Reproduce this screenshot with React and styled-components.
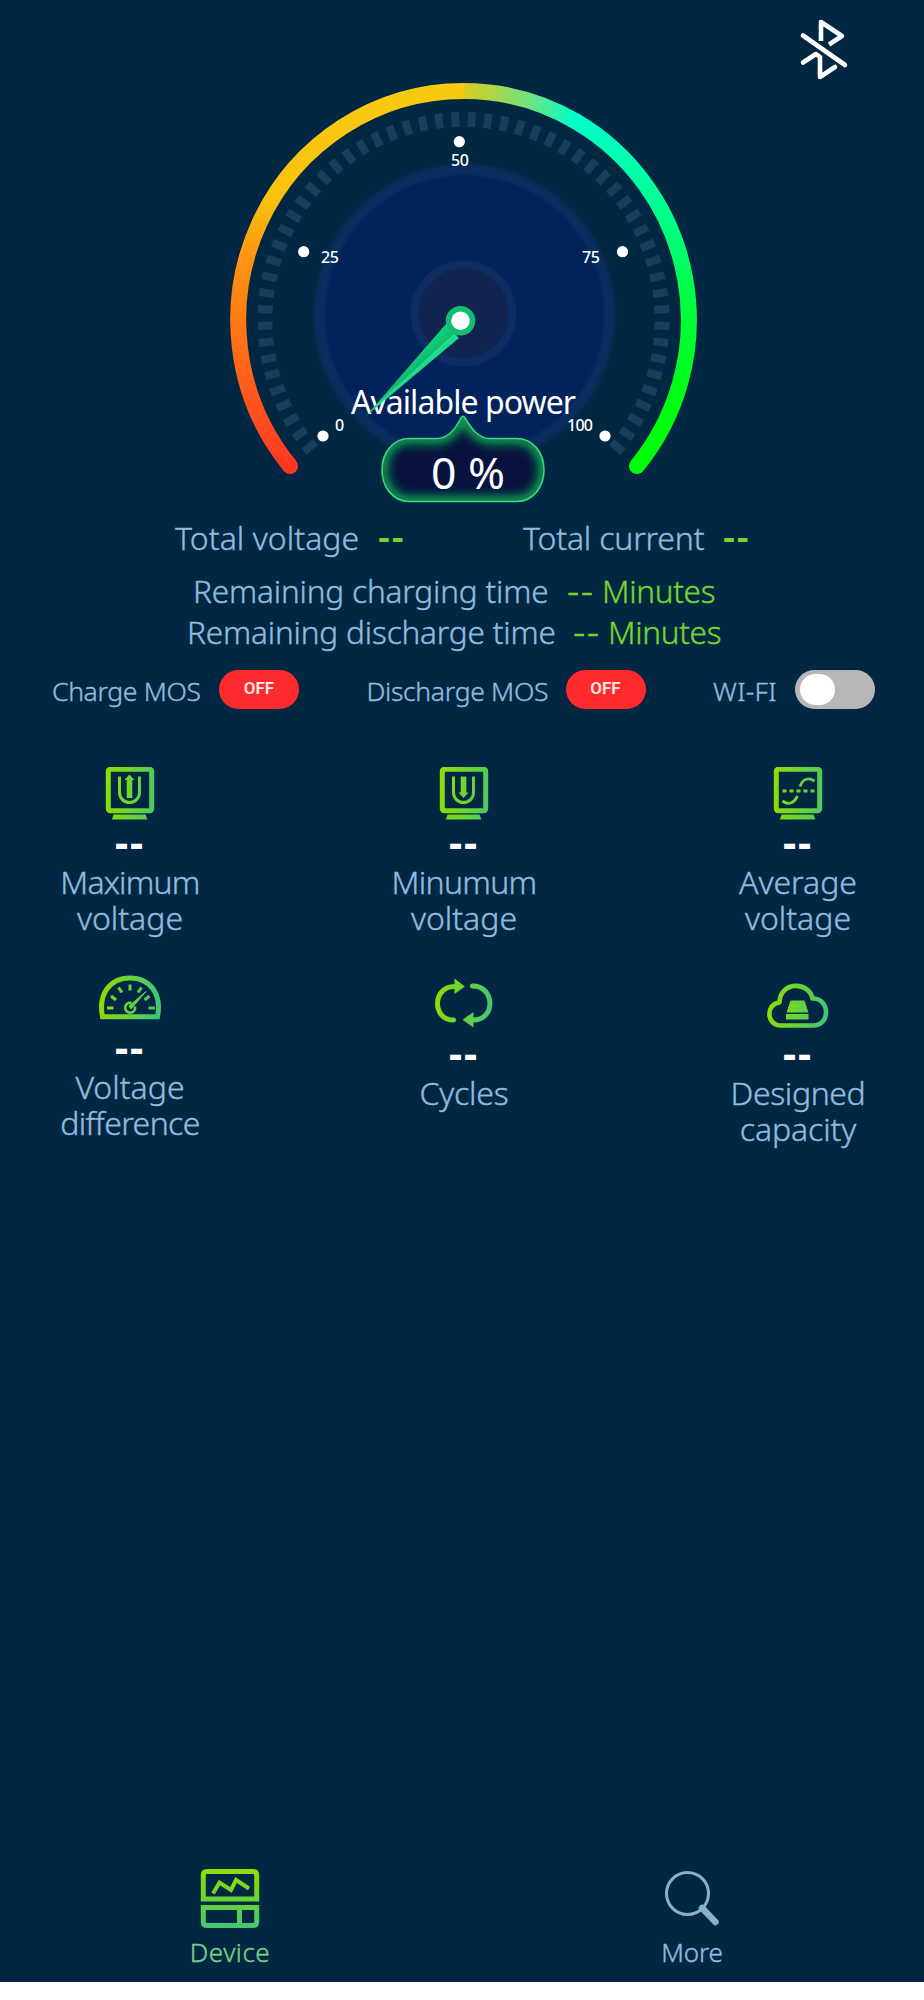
import React, { useState } from 'react';
import styled, { createGlobalStyle, css } from 'styled-components';

const GlobalStyle = createGlobalStyle`
    * {
        box-sizing: border-box;
    }

    body {
        margin: 0;
        background: #ffffff;
        font-family: "Noto Sans", "Open Sans", sans-serif;
        font-weight: 300;
    }
`

const Screen = styled.div`
    width: 924px;
    height: 1982px;
    background: #012743;
    color: #8fbbdf;
    display: flex;
    flex-direction: column;
`

const Header = styled.header`
    height: 80px;
    display: flex;
    justify-content: flex-end;
    padding: 16px 73px 0 0;
`

const GaugeBox = styled.section`
    height: 430px;
    display: flex;
    justify-content: center;

    text {
        fill: #ffffff;
    }
`

const Totals = styled.div`
    height: 54px;
    display: flex;
    padding: 6px 0 0 175px;
    gap: 120px;
    font-size: 32px;
    line-height: 44px;
`

const Total = styled.div`
    display: flex;
    gap: 20px;
    white-space: nowrap;
`

const Name = styled.span`
    width: ${(props) => props.$width}px;
    letter-spacing: ${(props) => props.$spacing || 0}px;
    white-space: nowrap;
    -webkit-text-stroke: 0.4px currentColor;
`

const Dashes = styled.span`
    color: #74d62c;
    white-space: nowrap;

    ${(props) => props.$kind === 'total' && css`
        width: 25px;
        font-size: 37px;
        font-weight: 600;
        line-height: 39px;
        letter-spacing: 1.8px;
    `}

    ${(props) => props.$kind === 'time' && css`
        width: 35px;
        font-size: 38px;
        line-height: 38px;
        letter-spacing: 1.5px;
        -webkit-text-stroke: 0.4px currentColor;
    `}
`

const Times = styled.div`
    height: 98px;
    padding-top: 6px;
`

const Time = styled.div`
    display: flex;
    height: 41px;
    padding-left: ${(props) => props.$left}px;
    font-size: 31.5px;
    line-height: 41px;
`

const Unit = styled.span`
    color: #74d62c;
    letter-spacing: -0.3px;
    -webkit-text-stroke: 0.4px currentColor;
`

const Switches = styled.div`
    height: 54px;
    display: flex;
    align-items: center;
    justify-content: space-between;
    padding: 1px 49px 0 52px;
    font-size: 26.5px;
`

const SwitchItem = styled.label`
    display: flex;
    align-items: center;
    gap: 19px;
    line-height: 40px;
`

const SwitchName = styled(Name)`
    padding-top: 3px;
`

const Toggle = styled.button`
    width: 80px;
    height: 39px;
    padding: 0 5px;
    border: none;
    border-radius: 20px;
    background: ${(props) => props.$gray ? '#b8b6b7' : '#ff2a2b'};
    color: #ffe9e9;
    display: flex;
    align-items: center;
    justify-content: ${(props) => props.$gray ? 'flex-start' : 'center'};
    font-family: Roboto, sans-serif;
    font-size: 17px;
    font-weight: 600;
    line-height: 37px;
    padding-bottom: ${(props) => props.$gray ? 0 : 2}px;
    cursor: pointer;
`

const Knob = styled.span`
    width: 35px;
    height: 31px;
    border-radius: 16px;
    background: #ffffff;
`

const Metrics = styled.section`
    flex: 1;
    display: grid;
    grid-template-columns: 150px 150px 150px;
    grid-auto-rows: 208px;
    justify-content: space-between;
    padding: 51px 51px 0 55px;
`

const Metric = styled.div`
    display: flex;
    flex-direction: column;
    align-items: center;
    padding-top: ${(props) => props.$top || 0}px;
`

const MetricIcon = styled.div`
    height: ${(props) => props.$height}px;
    flex: none;

    svg {
        display: block;
    }
`

const Value = styled.div`
    height: 36px;
    margin-bottom: 1px;
    color: #ffffff;
    font-size: 41px;
    font-weight: 700;
    line-height: 30px;
    letter-spacing: 1.8px;
`

const Label = styled.div`
    display: flex;
    flex-direction: column;
    align-items: center;
    font-size: 32px;
    line-height: 36.4px;
`

const Line = styled.span`
    letter-spacing: ${(props) => props.$spacing || 0}px;
    -webkit-text-stroke: 0.4px currentColor;
`

const TabBar = styled.nav`
    height: 130px;
    display: flex;
    border-top: 1px solid #04213a;
`

const Tab = styled.button`
    width: 50%;
    padding: 15px 2px 0 0;
    border: none;
    background: none;
    display: flex;
    flex-direction: column;
    align-items: center;
    gap: 5px;
    font: inherit;
    font-size: 26px;
    line-height: 36px;
    letter-spacing: ${(props) => props.$spacing || 0}px;
    color: ${(props) => props.$active ? '#72d184' : '#8fbbdf'};
    -webkit-text-stroke: 0.4px currentColor;
    cursor: pointer;
`

const TICK_STEP = 4.7;
const ticks = Array.from({ length: 56 }, (_, i) => (i - 27.5) * TICK_STEP);

const marks = [
    { value: '0', x: 323, y: 436, tx: 335, ty: 431, width: 8 },
    { value: '25', x: 303.7, y: 251.7, tx: 321, ty: 263, width: 18 },
    { value: '50', x: 459.3, y: 141.7, tx: 451, ty: 166, width: 18 },
    { value: '75', x: 622.5, y: 251.7, tx: 582, ty: 263, width: 18 },
    { value: '100', x: 605, y: 436, tx: 567, ty: 431, width: 26 },
];

const bubble = 'M409 438.5H437C449 438.5 456 428 461 418Q463 414.500 465 418C471 428 478 438.500 490 438.500H517C533 438.500 544 453 544 470S533 501.500 517 501.500H409C393 501.500 382 487 382 470S393 438.500 409 438.500Z';

const Gauge = () => (
    <svg width="484" height="430" viewBox="220 80 484 430">
        <defs>
            <linearGradient id="arcLeft" gradientUnits="userSpaceOnUse" x1="0" y1="466" x2="0" y2="83">
                <stop offset="0" stopColor="#ff3823" />
                <stop offset="0.38" stopColor="#ff7a14" />
                <stop offset="0.55" stopColor="#ff9611" />
                <stop offset="0.7" stopColor="#fac20e" />
                <stop offset="1" stopColor="#f7cb10" />
            </linearGradient>
            <linearGradient id="arcTop" gradientUnits="userSpaceOnUse" x1="463" y1="91" x2="574" y2="121">
                <stop offset="0" stopColor="#ddca20" />
                <stop offset="0.2" stopColor="#b5d440" />
                <stop offset="0.6" stopColor="#6be486" />
                <stop offset="1" stopColor="#00ffc8" />
            </linearGradient>
            <linearGradient id="arcRight" gradientUnits="userSpaceOnUse" x1="0" y1="121" x2="0" y2="466">
                <stop offset="0" stopColor="#00ffc8" />
                <stop offset="0.25" stopColor="#00ff91" />
                <stop offset="0.5" stopColor="#00ff45" />
                <stop offset="0.8" stopColor="#00ff16" />
                <stop offset="1" stopColor="#00fe08" />
            </linearGradient>
            <radialGradient id="dial">
                <stop offset="0" stopColor="#02235e" />
                <stop offset="0.9" stopColor="#02235a" />
                <stop offset="0.93" stopColor="#0a2d61" />
                <stop offset="0.97" stopColor="#082d5a" />
                <stop offset="1" stopColor="#012743" />
            </radialGradient>
            <linearGradient id="needle" gradientUnits="userSpaceOnUse" x1="405" y1="367" x2="416" y2="379">
                <stop offset="0" stopColor="#10cf78" />
                <stop offset="0.5" stopColor="#10b96f" />
                <stop offset="0.55" stopColor="#22de8b" />
                <stop offset="1" stopColor="#1bd584" />
            </linearGradient>
            <filter id="glow" x="-20%" y="-50%" width="140%" height="200%">
                <feGaussianBlur stdDeviation="5" />
            </filter>
            <clipPath id="bubbleClip">
                <path d={bubble} />
            </clipPath>
        </defs>

        <g fill="none" strokeWidth="16">
            <path d="M576 121.500A225.500 229 0 0 1 637 466" stroke="url(#arcRight)" strokeLinecap="round" />
            <path d="M463 91A225.500 229 0 0 1 577 122" stroke="url(#arcTop)" />
            <path d="M290 466A225.500 229 0 0 1 463.500 91" stroke="url(#arcLeft)" />
            <path d="M290 466L290.100 466.100" stroke="#ff3823" strokeLinecap="round" />
        </g>

        <g fill="#173e5b">
            {ticks.map((angle) => (
                <rect key={angle} x="-4" y="-208" width="8" height="15" transform={`translate(463.500 320) scale(0.99 1) rotate(${angle})`} />
            ))}
        </g>

        <circle cx="464.500" cy="315" r="153" fill="url(#dial)" />
        <circle cx="463.500" cy="313.500" r="49" fill="#10244f" stroke="#0d2c62" strokeWidth="8" />

        {marks.map((mark) => (
            <g key={mark.value}>
                <circle cx={mark.x} cy={mark.y} r="5.600" fill="#ffffff" />
                <text x={mark.tx} y={mark.ty} fontSize="16" fontWeight="500" textLength={mark.width}>{mark.value}</text>
            </g>
        ))}

        <text x="351" y="414" fontSize="32" fontWeight="400" textLength="225">Available power</text>
        <path d="M366 416L446 324L459 338Z" fill="url(#needle)" />
        <circle cx="460.500" cy="320.700" r="12" fill="#ffffff" stroke="#11bd72" strokeWidth="5.500" />

        <g clipPath="url(#bubbleClip)">
            <path d={bubble} fill="#07123e" />
            <path d={bubble} fill="none" stroke="#0b9a50" strokeWidth="12" filter="url(#glow)" />
        </g>
        <path d={bubble} fill="none" stroke="#34d880" strokeWidth="1.600" />
        <text x="431" y="489" fontSize="44" fontWeight="400" textLength="74" lengthAdjust="spacingAndGlyphs">0 %</text>
    </svg>
)

const BluetoothOff = () => (
    <svg width="54" height="66" viewBox="797 16 54 66" fill="none" stroke="#ffffff" strokeWidth="4.600" strokeLinecap="round" strokeLinejoin="round">
        <path d="M821 41V22L842 36L829 44.500" strokeLinecap="butt" />
        <path d="M803 35.500L845 65" />
        <path d="M803 62.500L816 54L820 57V77L835 67" />
    </svg>
)

const Gradient = ({ id, vertical }) => (
    <defs>
        <linearGradient id={id} gradientUnits="userSpaceOnUse" x1="0" y1="0" x2={vertical ? 0 : 60} y2={vertical ? 60 : 6}>
            <stop offset="0" stopColor="#8fdf00" />
            <stop offset="0.45" stopColor="#6fd62c" />
            <stop offset="1" stopColor="#43c674" />
        </linearGradient>
    </defs>
)

const MonitorIcon = ({ id, children }) => (
    <svg width="50" height="54" viewBox="0 0 50 54" fill="none" stroke={`url(#${id})`}>
        <Gradient id={id} />
        <rect x="3.300" y="2.300" width="43.400" height="41.400" rx="2" strokeWidth="5" />
        <path d="M8.500 47.500H40.500L42.300 52.500H7Z" fill={`url(#${id})`} stroke="none" />
        {children}
    </svg>
)

const MaxIcon = () => (
    <MonitorIcon id="max">
        <path d="M14.500 9.500V25.500a10 10 0 0 0 20 0V9.500" strokeWidth="3" />
        <path d="M24.400 7.500L29.500 13H27.300V31H21.700V13H19.500Z" fill="url(#max)" stroke="none" />
    </MonitorIcon>
)

const MinIcon = () => (
    <MonitorIcon id="min">
        <path d="M14.500 9.500V25.500a10 10 0 0 0 20 0V9.500" strokeWidth="3" />
        <path d="M24.500 31L29.500 25.500H27.300V9.500H21.700V25.500H19.500Z" fill="url(#min)" stroke="none" />
    </MonitorIcon>
)

const AverageIcon = () => (
    <MonitorIcon id="avg">
        <path d="M9.500 34C15 38 20.500 37 24.500 29M27 19.500C30 11 36 10.500 41.500 14" strokeWidth="2.800" />
        <path d="M9.500 24H42" strokeWidth="2.800" strokeDasharray="4 3" />
    </MonitorIcon>
)

const DifferenceIcon = () => (
    <svg width="64" height="46" viewBox="0 0 64 46" fill="none" stroke="url(#diff)">
        <Gradient id="diff" />
        <path d="M4.500 41.700C0 19 12 3 32 3S64 19 59.500 41.700Z" strokeWidth="5" />
        <path d="M9 33H15.500M13 21L18 25M20.500 12.500L24 17.500M32 9.500V15.500M43.500 12.500L40 17.500M51.500 21L46.500 25M50.500 33H57" strokeWidth="3" />
        <path d="M33.500 27.900A5 5 0 1 0 37 31.500" strokeWidth="2.600" />
        <path d="M48 16.500L31 31L33 34Z" fill="url(#diff)" strokeWidth="1" />
    </svg>
)

const CyclesIcon = () => (
    <svg width="60" height="50" viewBox="0 0 60 50" fill="none" stroke="url(#cycle)" strokeWidth="5" strokeLinecap="round">
        <Gradient id="cycle" />
        <path d="M19.500 42C-2 42 -2 8.500 20.500 8.500M38.500 8C61 8 62 41 40 42" />
        <path d="M20.500 0.500L31 8.500L20.500 16ZM39.500 34V49.500L28.500 41.800Z" fill="url(#cycle)" stroke="none" />
    </svg>
)

const CapacityIcon = () => (
    <svg width="62" height="46" viewBox="0 0 62 46" fill="none" stroke="url(#cloud)">
        <Gradient id="cloud" />
        <path d="M14 42.500C-1 42.500 -1.500 21 12.500 19.500C13 -2 42 -2 45.500 15.500C63 15 64 42.500 46 42.500Z" strokeWidth="4.600" strokeLinejoin="round" />
        <path d="M23.500 17.500H37.500L41.500 29.500H19.500ZM19 31H41.500V36.500H19Z" fill="url(#cloud)" stroke="none" />
    </svg>
)

const DeviceIcon = () => (
    <svg width="60" height="61" viewBox="0 0 60 61" fill="none" stroke="url(#device)" strokeWidth="5">
        <Gradient id="device" vertical />
        <path d="M3.300 31V7Q3.300 3.500 7 3.500H53Q56.700 3.500 56.700 7V31ZM3.300 39.500V54Q3.300 57.500 7 57.500H53Q56.700 57.500 56.700 54V39.500ZM39.500 40V57" />
        <path d="M13 25.500L19.500 14.500L31 22L36 12L49 20.500" strokeWidth="4" />
    </svg>
)

const SearchIcon = () => (
    <svg width="60" height="61" viewBox="0 0 60 61" fill="none" stroke="#85b3cc">
        <circle cx="25.500" cy="25.500" r="21" strokeWidth="3" />
        <path d="M40 40L53.500 54" strokeWidth="6.500" strokeLinecap="round" />
    </svg>
)

const App = () => {
    const [tab, setTab] = useState('device');

    return (
        <>
            <GlobalStyle />
            <Screen>
                <Header>
                    <BluetoothOff />
                </Header>
                <GaugeBox>
                    <Gauge />
                </GaugeBox>

                <Totals>
                    <Total>
                        <Name $width={183} $spacing={0.05}>Total voltage</Name>
                        <Dashes $kind="total">--</Dashes>
                    </Total>
                    <Total>
                        <Name $width={180} $spacing={-0.2}>Total current</Name>
                        <Dashes $kind="total">--</Dashes>
                    </Total>
                </Totals>
                <Times>
                    <Time $left={193}>
                        <Name $width={374} $spacing={-0.15}>Remaining charging time</Name>
                        <Dashes $kind="time">--</Dashes>
                        <Unit>Minutes</Unit>
                    </Time>
                    <Time $left={187}>
                        <Name $width={386} $spacing={-0.15}>Remaining discharge time</Name>
                        <Dashes $kind="time">--</Dashes>
                        <Unit>Minutes</Unit>
                    </Time>
                </Times>

                <Switches>
                    <SwitchItem>
                        <SwitchName $width={148} $spacing={-0.35}>Charge MOS</SwitchName>
                        <Toggle>OFF</Toggle>
                    </SwitchItem>
                    <SwitchItem>
                        <SwitchName $width={180} $spacing={-0.3}>Discharge MOS</SwitchName>
                        <Toggle>OFF</Toggle>
                    </SwitchItem>
                    <SwitchItem>
                        <SwitchName $width={63} $spacing={0.3}>WI-FI</SwitchName>
                        <Toggle $gray><Knob /></Toggle>
                    </SwitchItem>
                </Switches>

                <Metrics>
                    <Metric>
                        <MetricIcon $height={60}><MaxIcon /></MetricIcon>
                        <Value>--</Value>
                        <Label>
                            <Line $spacing={-0.8}>Maximum</Line>
                            <Line>voltage</Line>
                        </Label>
                    </Metric>
                    <Metric>
                        <MetricIcon $height={60}><MinIcon /></MetricIcon>
                        <Value>--</Value>
                        <Label>
                            <Line $spacing={-0.7}>Minumum</Line>
                            <Line>voltage</Line>
                        </Label>
                    </Metric>
                    <Metric>
                        <MetricIcon $height={60}><AverageIcon /></MetricIcon>
                        <Value>--</Value>
                        <Label>
                            <Line>Average</Line>
                            <Line>voltage</Line>
                        </Label>
                    </Metric>
                    <Metric>
                        <MetricIcon $height={57}><DifferenceIcon /></MetricIcon>
                        <Value>--</Value>
                        <Label>
                            <Line>Voltage</Line>
                            <Line $spacing={-0.6}>difference</Line>
                        </Label>
                    </Metric>
                    <Metric $top={3}>
                        <MetricIcon $height={60}><CyclesIcon /></MetricIcon>
                        <Value>--</Value>
                        <Label>
                            <Line $spacing={-0.2}>Cycles</Line>
                        </Label>
                    </Metric>
                    <Metric $top={8}>
                        <MetricIcon $height={55}><CapacityIcon /></MetricIcon>
                        <Value>--</Value>
                        <Label>
                            <Line $spacing={-0.4}>Designed</Line>
                            <Line $spacing={-0.1}>capacity</Line>
                        </Label>
                    </Metric>
                </Metrics>

                <TabBar>
                    <Tab $active={tab === 'device'} $spacing={0.5} onClick={() => setTab('device')}>
                        <DeviceIcon />
                        Device
                    </Tab>
                    <Tab $active={tab === 'more'} $spacing={-0.2} onClick={() => setTab('more')}>
                        <SearchIcon />
                        More
                    </Tab>
                </TabBar>
            </Screen>
        </>
    )
}

export default App
